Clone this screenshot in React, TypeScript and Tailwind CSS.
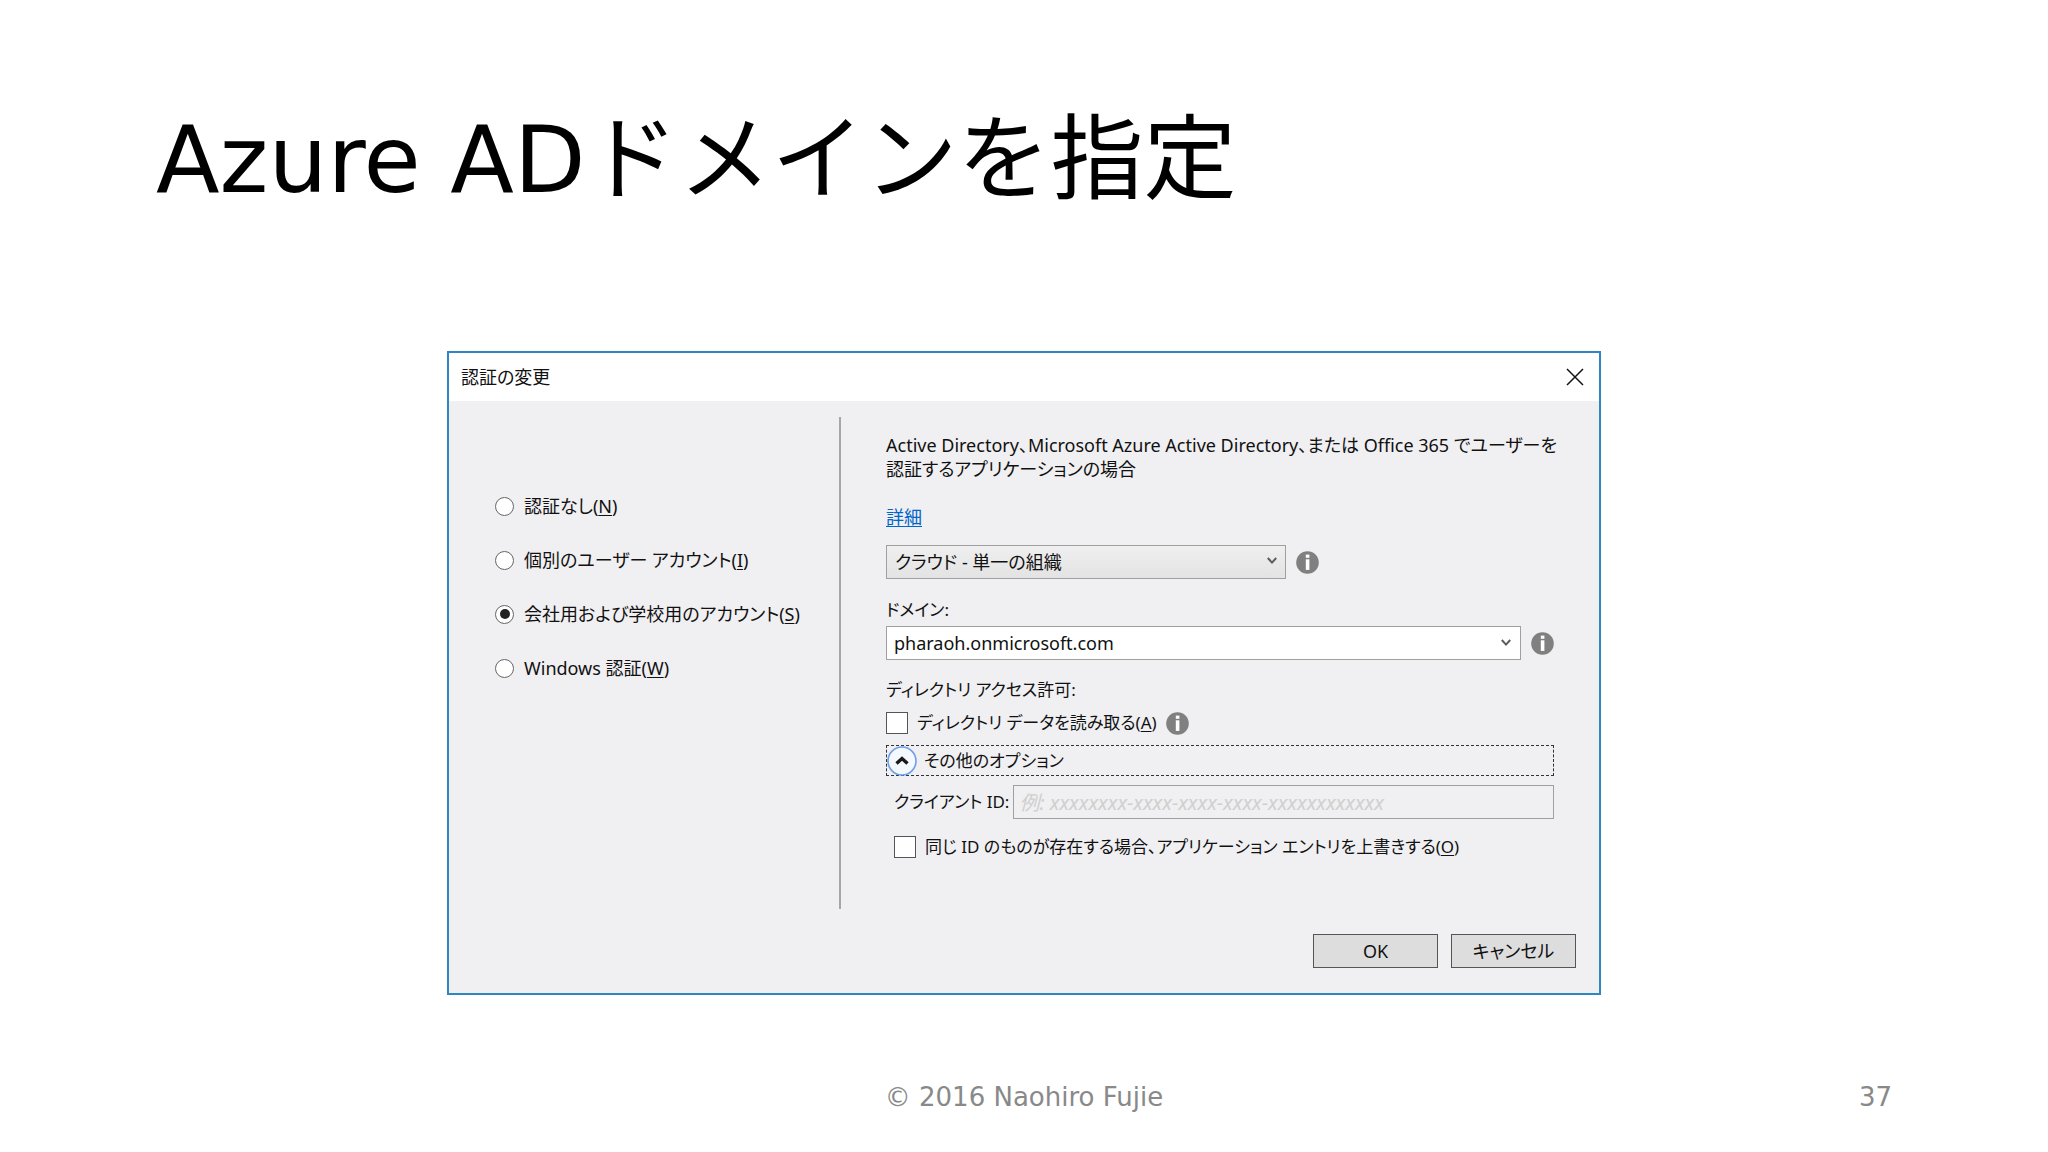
import { useState } from 'react';

const AUTH_OPTIONS = [
  { id: 'none', label: '認証なし', accessKey: 'N' },
  { id: 'individual', label: '個別のユーザー アカウント', accessKey: 'I' },
  { id: 'work', label: '会社用および学校用のアカウント', accessKey: 'S' },
  { id: 'windows', label: 'Windows 認証', accessKey: 'W' },
];

function AccessKey({ children }: { children: string }) {
  return <>(<span className="underline underline-offset-2">{children}</span>)</>;
}

function InfoIcon() {
  return (
    <svg viewBox="0 0 23 23" className="h-[23px] w-[23px] shrink-0" aria-hidden="true">
      <circle cx="11.5" cy="11.5" r="11.3" fill="#808080" />
      <rect x="9.8" y="3.6" width="3.6" height="3.2" fill="#fff" />
      <rect x="9.8" y="8.3" width="3.6" height="10.6" fill="#fff" />
    </svg>
  );
}

function Chevron() {
  return (
    <svg viewBox="0 0 10 8" className="h-2 w-[10px]" aria-hidden="true">
      <path d="M0.8 1 L5 5.6 L9.2 1" fill="none" stroke="#5c5c5c" strokeWidth="2" />
    </svg>
  );
}

function CheckBox({ id }: { id: string }) {
  return (
    <input
      id={id}
      type="checkbox"
      className="h-[22px] w-[22px] shrink-0 appearance-none border border-[#555] bg-white checked:bg-[#707070]"
    />
  );
}

function AuthList() {
  const [selected, setSelected] = useState('work');

  return (
    <fieldset className="flex w-[392px] shrink-0 flex-col gap-[30px] border-r-2 border-[#a6a6a6] pt-[77px] pl-[46px]">
      {AUTH_OPTIONS.map((o) => (
        <label key={o.id} className="flex h-6 items-center gap-[10px]">
          <input
            type="radio"
            name="auth"
            checked={selected === o.id}
            onChange={() => setSelected(o.id)}
            className="grid h-[19px] w-[19px] shrink-0 appearance-none place-items-center rounded-full border border-[#666] bg-white checked:before:h-[10px] checked:before:w-[10px] checked:before:rounded-full checked:before:bg-[#222]"
          />
          <span className="whitespace-nowrap">
            {o.label}
            <AccessKey>{o.accessKey}</AccessKey>
          </span>
        </label>
      ))}
    </fieldset>
  );
}

function OrgSettings() {
  return (
    <div className="flex min-w-0 flex-1 flex-col pt-4 pr-[45px] pl-[45px] text-[17px]">
      <p className="text-[18px] leading-6 whitespace-nowrap">
        Active Directory、Microsoft Azure Active Directory、または Office 365 でユーザーを
        <br />
        認証するアプリケーションの場合
      </p>
      <a href="#details" className="mt-6 self-start text-[18px] leading-6 text-[#0066cc] underline underline-offset-2">
        詳細
      </a>

      <div className="mt-4 flex items-center gap-[10px]">
        <div className="relative w-[400px]">
          <select
            aria-label="組織の種類"
            className="h-[34px] w-full appearance-none border border-[#a0a0a0] bg-linear-to-b from-[#efefef] to-[#e3e3e3] pl-2 text-[18px]"
          >
            <option>クラウド - 単一の組織</option>
          </select>
          <span className="pointer-events-none absolute top-[12px] right-[9px]">
            <Chevron />
          </span>
        </div>
        <InfoIcon />
      </div>

      <label htmlFor="domain" className="mt-[19px] self-start leading-6">
        ドメイン:
      </label>
      <div className="mt-1 flex items-center gap-[10px]">
        <div className="flex h-[34px] flex-1 items-center border border-[#a0a0a0] bg-white pr-[9px] pl-[7px]">
          <input
            id="domain"
            defaultValue="pharaoh.onmicrosoft.com"
            className="min-w-0 flex-1 text-[18px] outline-none"
          />
          <button type="button" aria-label="ドメインの一覧">
            <Chevron />
          </button>
        </div>
        <InfoIcon />
      </div>

      <p className="mt-[18px] leading-6">ディレクトリ アクセス許可:</p>
      <div className="mt-[9px] flex h-6 items-center gap-[9px]">
        <CheckBox id="read-directory" />
        <label htmlFor="read-directory">
          ディレクトリ データを読み取る
          <AccessKey>A</AccessKey>
        </label>
        <InfoIcon />
      </div>

      <button
        type="button"
        aria-expanded="true"
        className="mt-[10px] flex h-[31px] items-center gap-[7px] border border-dashed border-[#333] text-left"
      >
        <svg viewBox="0 0 30 30" className="h-[30px] w-[30px]" aria-hidden="true">
          <circle cx="15" cy="15" r="14" fill="#f4f8ff" stroke="#6f9fe8" strokeWidth="1.6" />
          <path d="M9.5 17.5 L15 12.5 L20.5 17.5" fill="none" stroke="#1a1a1a" strokeWidth="3.4" />
        </svg>
        その他のオプション
      </button>

      <div className="mt-[9px] flex flex-col gap-4 pl-2">
        <div className="flex items-center gap-1">
          <label htmlFor="client-id" className="whitespace-nowrap">
            クライアント ID:
          </label>
          <input
            id="client-id"
            disabled
            placeholder="例: xxxxxxxx-xxxx-xxxx-xxxx-xxxxxxxxxxxx"
            className="h-[34px] min-w-0 flex-1 border border-[#a0a0a0] pl-[5px] text-[20px] placeholder:text-[#cfcfcf] placeholder:italic"
          />
        </div>
        <div className="flex h-6 items-center gap-[9px]">
          <CheckBox id="overwrite" />
          <label htmlFor="overwrite" className="whitespace-nowrap">
            同じ ID のものが存在する場合、アプリケーション エントリを上書きする
            <AccessKey>O</AccessKey>
          </label>
        </div>
      </div>
    </div>
  );
}

function AuthDialog() {
  return (
    <section
      role="dialog"
      aria-labelledby="dialog-title"
      className="mx-auto w-full max-w-[1154px] border-2 border-[#2f86c1] bg-[#f0eff1] font-['Noto_Sans','Noto_Sans_CJK_JP',sans-serif] text-[18px] text-[#111] [font-feature-settings:'palt']"
    >
      <header className="flex h-12 items-center justify-between bg-white pr-[15px] pl-3">
        <h2 id="dialog-title">認証の変更</h2>
        <button type="button" aria-label="閉じる">
          <svg viewBox="0 0 18 18" className="h-[18px] w-[18px]" aria-hidden="true">
            <path d="M1 1 L17 17 M17 1 L1 17" fill="none" stroke="#111" strokeWidth="1.5" />
          </svg>
        </button>
      </header>
      <div className="flex min-h-[508px] pt-4">
        <AuthList />
        <OrgSettings />
      </div>
      <div className="flex justify-end gap-[13px] pt-[25px] pr-[23px] pb-[25px]">
        <button type="button" className="h-[34px] w-[125px] border border-[#555] bg-[#dddddd]">
          OK
        </button>
        <button type="button" className="h-[34px] w-[125px] border border-[#555] bg-[#dddddd]">
          キャンセル
        </button>
      </div>
    </section>
  );
}

export default function App() {
  return (
    <main className="flex min-h-screen flex-col bg-white font-['DejaVu_Sans','Noto_Sans_CJK_JP',sans-serif]">
      <h1 className="px-[156px] pt-24 text-[93px] leading-[128px] text-black">Azure ADドメインを指定</h1>
      <div className="mt-[127px]">
        <AuthDialog />
      </div>
      <footer className="mt-auto grid grid-cols-3 px-[156px] pb-[39px] text-[26px] leading-8 text-[#898989]">
        <span className="col-start-2 text-center">© 2016 Naohiro Fujie</span>
        <span className="text-right">37</span>
      </footer>
    </main>
  );
}
